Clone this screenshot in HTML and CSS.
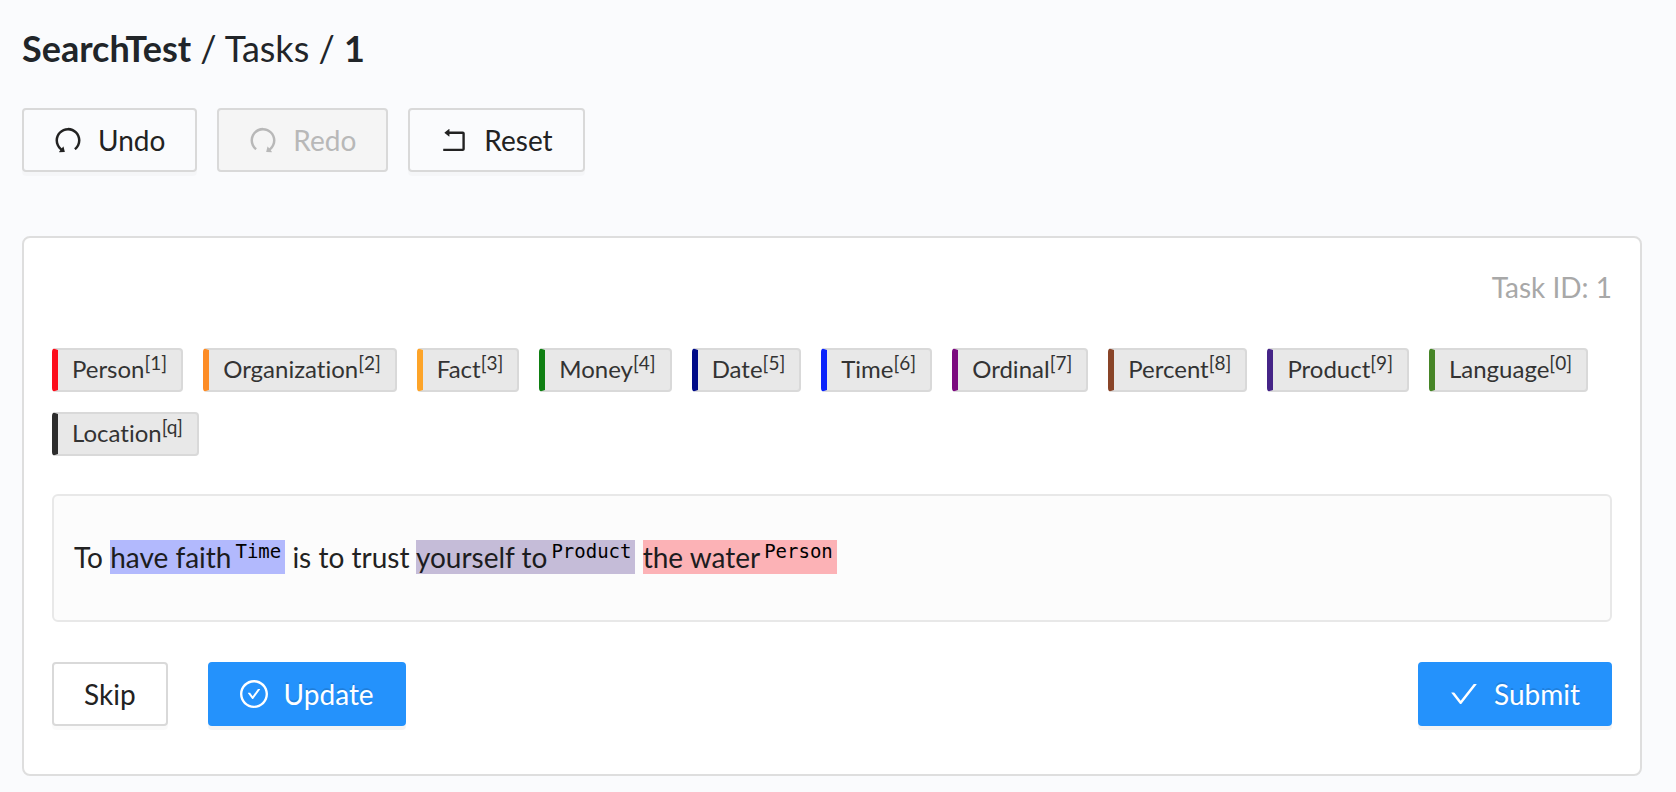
FILE: index.html
```html
<!DOCTYPE html>
<html lang="en">
<head>
<meta charset="utf-8">
<meta name="viewport" content="width=device-width, initial-scale=1">
<title>SearchTest / Tasks / 1</title>
<link rel="stylesheet" href="styles.css">
</head>
<body>
<svg class="sprite" aria-hidden="true">
  <symbol id="undo" viewBox="0 0 1024 1024"><path d="M511.4 124C290.5 124.3 112 303 112 523.9c0 128 60.2 242 153.8 315.2l-37.5 48c-4.1 5.3-.3 13 6.3 12.9l167-.8c5.2 0 9-4.9 7.7-9.9L369.8 727a8 8 0 0 0-14.1-3L315 776.1c-10.2-8-20-16.7-29.3-26a318.64 318.64 0 0 1-68.6-101.7C200.4 609 192 567.1 192 523.9s8.4-85.1 25.1-124.5c16.1-38.1 39.2-72.3 68.6-101.7 29.4-29.4 63.6-52.5 101.7-68.6C426.9 212.4 468.8 204 512 204s85.1 8.4 124.5 25.1c38.1 16.1 72.3 39.2 101.7 68.6 29.4 29.4 52.5 63.6 68.6 101.7 16.7 39.4 25.1 81.3 25.1 124.5s-8.4 85.1-25.1 124.5a318.64 318.64 0 0 1-68.6 101.7c-7.5 7.5-15.3 14.5-23.4 21.2a7.93 7.93 0 0 0-1.2 11.1l39.4 50.5c2.8 3.5 7.9 4.1 11.4 1.3C854.5 760.8 912 649.1 912 523.9c0-221.1-179.4-400.2-400.6-399.9z"/></symbol>
  <symbol id="rollback" viewBox="0 0 1024 1024"><path d="M793 242H366v-74c0-6.7-7.7-10.4-12.9-6.3l-142 112a8 8 0 0 0 0 12.6l142 112c5.2 4.1 12.9.4 12.9-6.3v-74h415v470H175c-4.4 0-8 3.6-8 8v60c0 4.4 3.6 8 8 8h618c35.3 0 64-28.7 64-64V306c0-35.3-28.7-64-64-64z"/></symbol>
  <symbol id="check" viewBox="0 0 1024 1024"><path d="M912 190h-69.9c-9.8 0-19.1 4.5-25.1 12.2L404.7 724.5 207 474a32 32 0 0 0-25.1-12.2H112c-6.7 0-10.4 7.7-6.3 12.9l273.9 347c12.8 16.2 37.4 16.2 50.3 0l488.4-618.9c4.1-5.1.4-12.8-6.3-12.8z"/></symbol>
  <symbol id="check-circle" viewBox="0 0 1024 1024"><path d="M699 353h-46.9c-10.2 0-19.9 4.9-25.9 13.3L469 584.3l-71.2-98.8c-6-8.3-15.6-13.3-25.9-13.3H325c-6.5 0-10.3 7.4-6.5 12.7l124.6 172.8a31.8 31.8 0 0 0 51.7 0l210.6-292c3.9-5.3.1-12.7-6.4-12.7z"/><path d="M512 64C264.6 64 64 264.6 64 512s200.6 448 448 448 448-200.6 448-448S759.4 64 512 64zm0 820c-205.4 0-372-166.6-372-372s166.6-372 372-372 372 166.6 372 372-166.6 372-372 372z"/></symbol>
</svg>
<main class="page">
  <h1 class="title"><a class="crumb strong" href="#">SearchTest</a> / <a class="crumb" href="#">Tasks</a> / <span class="strong">1</span></h1>
  <div class="toolbar">
    <button class="btn with-icon" type="button"><svg class="icon"><use href="#undo"/></svg>Undo</button>
    <button class="btn with-icon" type="button" disabled><svg class="icon flipped"><use href="#undo"/></svg>Redo</button>
    <button class="btn with-icon" type="button"><svg class="icon"><use href="#rollback"/></svg>Reset</button>
  </div>
  <section class="card">
    <p class="task-id">Task ID: 1</p>
    <div class="labels">
      <button type="button" class="label person">Person<sup>[1]</sup></button>
      <button type="button" class="label organization">Organization<sup>[2]</sup></button>
      <button type="button" class="label fact">Fact<sup>[3]</sup></button>
      <button type="button" class="label money">Money<sup>[4]</sup></button>
      <button type="button" class="label date">Date<sup>[5]</sup></button>
      <button type="button" class="label time">Time<sup>[6]</sup></button>
      <button type="button" class="label ordinal">Ordinal<sup>[7]</sup></button>
      <button type="button" class="label percent">Percent<sup>[8]</sup></button>
      <button type="button" class="label product">Product<sup>[9]</sup></button>
      <button type="button" class="label language">Language<sup>[0]</sup></button>
      <button type="button" class="label location">Location<sup>[q]</sup></button>
    </div>
    <p class="text">To <mark class="span-time">have faith<sup>Time</sup></mark> is to trust <mark class="span-product">yourself to<sup>Product</sup></mark> <mark class="span-person">the water<sup>Person</sup></mark></p>
    <div class="actions">
      <button class="btn" type="button">Skip</button>
      <button class="btn with-icon primary" type="button"><svg class="icon"><use href="#check-circle"/></svg>Update</button>
      <button class="btn with-icon primary submit" type="button"><svg class="icon"><use href="#check"/></svg>Submit</button>
    </div>
  </section>
</main>
</body>
</html>
```
FILE: styles.css
```css
* { box-sizing: border-box; }

body {
  margin: 0;
  background: #fafbfd;
  color: #222;
  font: 28px/42px Lato, sans-serif;
  font-variant-ligatures: none;
}

.sprite { display: none; }

.page { padding: 27px 34px 16px 22px; }

.title {
  margin: 0 0 39px;
  font-size: 36px;
  line-height: 42px;
  font-weight: 400;
  color: #212529;
}

.crumb { color: inherit; text-decoration: none; }
.strong { font-weight: 700; }

.toolbar { display: flex; gap: 20px; margin-bottom: 64px; }

.btn {
  display: inline-flex;
  align-items: center;
  gap: 14px;
  height: 64px;
  padding: 0 30px;
  border: 2px solid #d9d9d9;
  border-radius: 4px;
  background: transparent;
  box-shadow: 0 4px 0 rgba(0, 0, 0, 0.02);
  color: #222;
  font: inherit;
}

.with-icon { padding-left: 28px; }

.btn:disabled {
  background: #f5f5f5;
  box-shadow: none;
  color: #b8b8b8;
}

.primary {
  border-color: #2492fc;
  background: #2492fc;
  box-shadow: 0 4px 0 rgba(0, 0, 0, 0.045);
  color: #fff;
  text-shadow: 0 -2px 0 rgba(0, 0, 0, 0.12);
}

.icon { width: 32px; height: 32px; fill: currentColor; }
.flipped { transform: scaleX(-1); }

.card {
  padding: 28px;
  padding-bottom: 48px;
  border: 2px solid #dedede;
  border-radius: 8px;
  background: #fff;
}

.task-id {
  margin: 0 0 40px;
  color: #a8a8a8;
  text-align: right;
}

.labels {
  display: flex;
  flex-wrap: wrap;
  gap: 20px;
  margin-bottom: 38px;
}

.label {
  height: 44px;
  padding: 0 14px 2px;
  border: 2px solid #d9d9d9;
  border-left-width: 6px;
  border-radius: 4px;
  background: #e8e8e8;
  color: #333;
  font: 24px/38px Lato, sans-serif;
  font-variant-ligatures: none;
}

.label sup {
  position: relative;
  top: -8px;
  font-size: 19px;
  line-height: 0;
  vertical-align: baseline;
}

.person { border-left-color: #fc0d1b; }
.organization { border-left-color: #fd8c25; }
.fact { border-left-color: #fda429; }
.money { border-left-color: #0f7f12; }
.date { border-left-color: #000b88; }
.time { border-left-color: #0b24fb; }
.ordinal { border-left-color: #7c0a7f; }
.percent { border-left-color: #894428; }
.product { border-left-color: #452487; }
.language { border-left-color: #468527; }
.location { border-left-color: #2d2d2d; }

.text {
  margin: 0 0 40px;
  padding: 40px 20px 42px;
  border: 2px solid #e8e8e8;
  border-radius: 6px;
  background: #fcfcfc;
}

.text mark { color: #1c1c20; }

.text sup {
  padding: 0 4px;
  color: #000;
  font: 19px/0 "DejaVu Sans Mono", monospace;
  position: relative;
  top: -10px;
  vertical-align: baseline;
}

.span-time { background: #b2b9fd; }
.span-product { background: #c5bcd8; }
.span-person { background: #fcb2b6; }

.actions { display: flex; gap: 40px; }
.submit { margin-left: auto; }
```
